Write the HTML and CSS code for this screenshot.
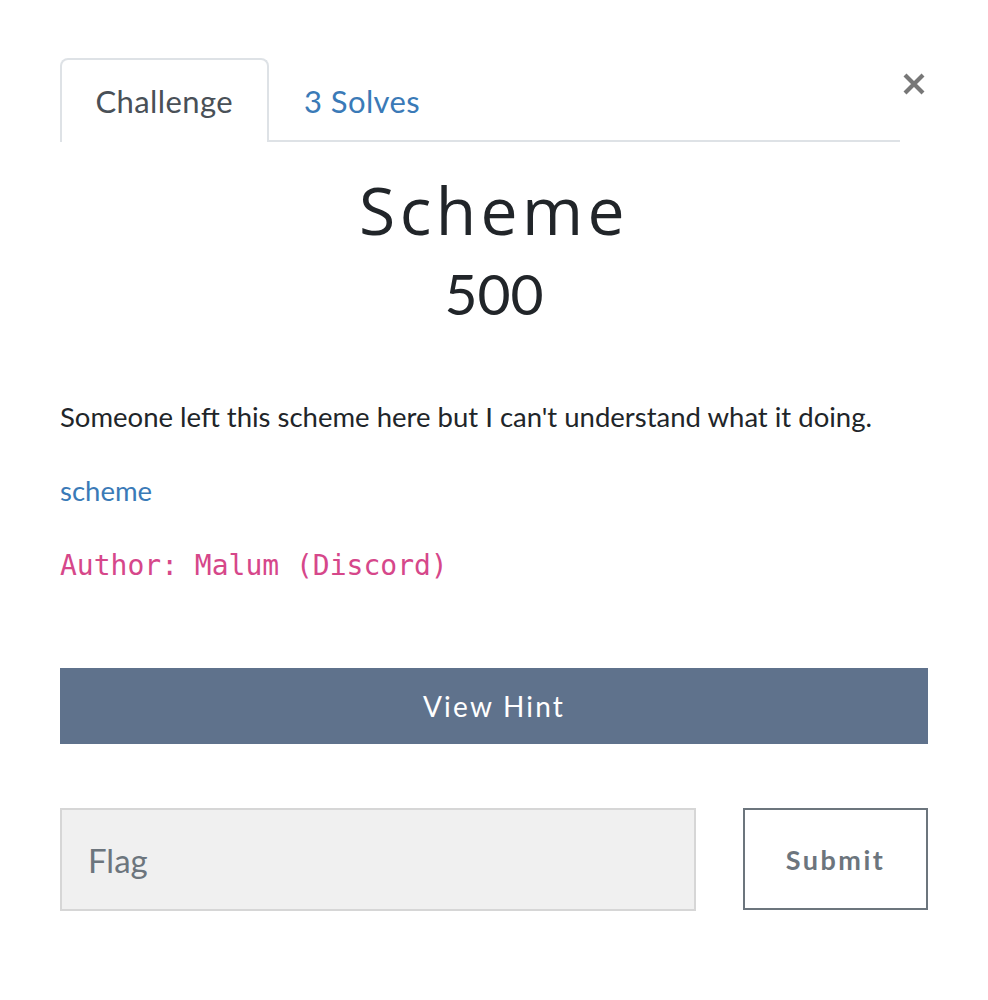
FILE: index.html
```html
<!DOCTYPE html>
<html>
<head>
<meta charset="utf-8">
<link rel="stylesheet" href="styles.css">
</head>
<body>
<div class="modal">
  <button class="close" aria-label="Close">
    <svg width="24" height="24" viewBox="0 0 24 24"><path d="M3 3L21 21M21 3L3 21" stroke="#777" stroke-width="4.2" stroke-linecap="butt"/></svg>
  </button>
  <nav class="tabs">
    <a class="tab active">Challenge</a>
    <a class="tab">3 Solves</a>
  </nav>
  <div class="head">
    <h2 class="title">Scheme</h2>
    <h3 class="value">500</h3>
  </div>
  <div class="desc">
    <p>Someone left this scheme here but I can't understand what it doing.</p>
    <p><a class="link">scheme</a></p>
    <p><code>Author: Malum (Discord)</code></p>
  </div>
  <button class="hint">View Hint</button>
  <div class="submit-row">
    <div class="flag">Flag</div>
    <button class="submit">Submit</button>
  </div>
</div>
</body>
</html>
```

FILE: styles.css
```css
html, body {
  margin: 0;
  padding: 0;
  background: #fff;
}
body {
  font-family: Lato, "Noto Sans", sans-serif;
  color: #212529;
}
.modal {
  position: relative;
  width: 868px;
  padding: 58px 60px 0 60px;
}
.close {
  position: absolute;
  top: 72px;
  right: 62px;
  border: 0;
  background: none;
  padding: 0;
  width: 24px;
  height: 24px;
}
.close svg { display: block; }
.tabs {
  display: flex;
  width: 840px;
  border-bottom: 2px solid #dee2e6;
}
.tab {
  display: block;
  font-size: 31px;
  letter-spacing: 0.4px;
  line-height: 38px;
  padding: 22px 33.5px 20px 33.5px;
  color: #3a7ab7;
  border: 2px solid transparent;
  border-bottom: 0;
  border-radius: 8px 8px 0 0;
  margin-bottom: -2px;
}
.tab.active {
  color: #495057;
  border-color: #dee2e6;
  background: #fff;
  padding-bottom: 22px;
}
.head {
  text-align: center;
}
.title {
  font-family: "Open Sans", Lato, sans-serif;
  font-weight: 400;
  font-size: 66px;
  letter-spacing: 4.4px;
  line-height: 80px;
  margin: 27px 0 0 0;
  color: #212529;
}
.value {
  font-weight: 400;
  font-size: 57px;
  line-height: 72px;
  margin: 8px 0 0 0;
}
.desc {
  margin-top: 71px;
}
.desc p {
  margin: 0 0 40px 0;
  font-size: 27.5px;
  line-height: 34px;
}
.link {
  color: #3a7ab7;
}
code {
  font-family: "DejaVu Sans Mono", monospace;
  font-size: 28px;
  color: #d6478a;
}
.hint {
  display: block;
  width: 868px;
  height: 76px;
  margin-top: 85px;
  border: 0;
  background: #5f728c;
  color: #fff;
  font-family: Lato, sans-serif;
  font-size: 28px;
  letter-spacing: 2.2px;
}
.submit-row {
  display: flex;
  gap: 47px;
  margin-top: 64px;
}
.flag {
  box-sizing: border-box;
  width: 636px;
  height: 103px;
  background: #f0f0f0;
  border: 2px solid #d6d6d6;
  padding: 0 26px;
  display: flex;
  align-items: center;
  font-size: 33px;
  color: #6c757d;
}
.submit {
  box-sizing: border-box;
  width: 185px;
  height: 102px;
  background: #fff;
  border: 2px solid #6c757d;
  font-family: Lato, sans-serif;
  font-weight: 700;
  font-size: 27px;
  letter-spacing: 2.5px;
  color: #6c757d;
}
```
